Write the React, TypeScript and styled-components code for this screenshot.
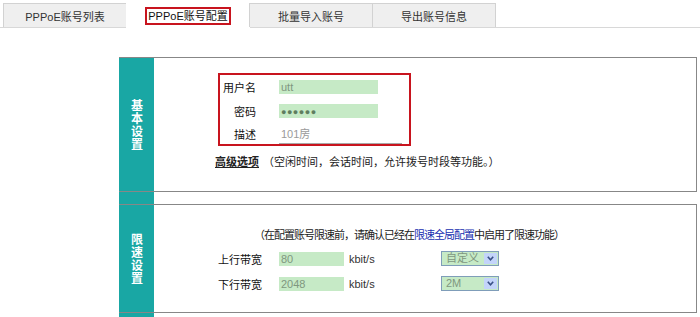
import React from 'react';
import styled, { createGlobalStyle } from 'styled-components';

const colors = {
  teal: '#19a7a4',
  line: 'rgba(0, 0, 0, 0.47)',
  field: '#c6eac6',
  fieldText: '#7f977f',
  red: '#c8141e',
  text: '#222222',
};

const GlobalStyle = createGlobalStyle`
  body {
    margin: 0;
    background: #ffffff;
    font-family: 'Liberation Sans', 'Noto Sans CJK SC', sans-serif;
    font-size: 11px;
    color: ${colors.text};
  }
`;

const Page = styled.div`
  width: 700px;
  height: 317px;
  overflow: hidden;
`;

const TabBar = styled.div`
  display: flex;
  padding: 3px 0 0 3px;
  height: 24px;
  border-bottom: 1px solid #d8d8d8;
`;

const Tab = styled.div<{ $active?: boolean }>`
  width: 124px;
  height: ${p => (p.$active ? '25px' : '24px')};
  box-sizing: border-box;
  display: flex;
  align-items: center;
  justify-content: center;
  background: ${p => (p.$active ? '#ffffff' : '#efefef')};
  border: 1px solid ${p => (p.$active ? 'transparent' : '#d2d2d2')};
  border-bottom: none;
  margin-right: -1px;
  color: #333333;
  font-size: 11px;
`;

const TabHighlight = styled.span`
  border: 2px solid ${colors.red};
  padding: 1px 1px;
  color: #111111;
  line-height: 12px;
`;

const Main = styled.div`
  margin: 29px 0 0 119px;
  width: 578px;
`;

const Panel = styled.div`
  display: grid;
  grid-template-columns: 35px 1fr;
  border-top: 1px solid ${colors.line};
  border-bottom: 1px solid ${colors.line};
`;

const Side = styled.div`
  background: ${colors.teal};
  display: flex;
  align-items: center;
  justify-content: center;
`;

const SideTitle = styled.div`
  writing-mode: vertical-rl;
  text-orientation: upright;
  font-family: 'Noto Sans CJK SC', sans-serif;
  font-size: 12px;
  letter-spacing: 1px;
  line-height: 14px;
  font-weight: 700;
  color: #ffffff;
`;

const Content = styled.div<{ $height: number }>`
  height: ${p => p.$height}px;
  border-right: 1px solid #888888;
`;

const Spacer = styled.div`
  display: grid;
  grid-template-columns: 35px 1fr;
  height: 12px;
`;

const HighlightBox = styled.div`
  margin: 15px 0 0 64px;
  width: 193px;
  height: 73px;
  box-sizing: border-box;
  border: 2px solid ${colors.red};
`;

const FormRow = styled.div<{ $height?: number; $bottom?: boolean }>`
  display: flex;
  align-items: ${p => (p.$bottom ? 'flex-end' : 'center')};
  height: ${p => p.$height ?? 24}px;
`;

const Label = styled.div<{ $width: number; $gap: number }>`
  width: ${p => p.$width}px;
  margin-right: ${p => p.$gap}px;
  text-align: right;
  font-family: 'Noto Sans CJK SC', sans-serif;
  font-size: 11px;
  line-height: 14px;
  white-space: nowrap;
  color: #111111;
`;

const LabelInRow = styled(Label)`
  align-self: center;
`;

const Field = styled.div<{ $width: number }>`
  width: ${p => p.$width}px;
  height: 14px;
  background: ${colors.field};
  color: ${colors.fieldText};
  font-size: 11px;
  line-height: 14px;
  padding-left: 2px;
  box-sizing: border-box;
`;

const Dots = styled.span`
  font-size: 9px;
  letter-spacing: 0.5px;
  color: #5f7d5f;
`;

const UnderlineField = styled.div`
  width: 123px;
  height: 17px;
  box-sizing: border-box;
  border-bottom: 1px solid #a8a8a8;
  color: #9a9a9a;
  font-family: 'Liberation Sans', 'Noto Sans CJK SC', sans-serif;
  font-size: 11px;
  line-height: 15px;
  padding-left: 2px;
`;

const AdvRow = styled.div`
  display: flex;
  align-items: center;
  margin: 7px 0 0 61px;
  height: 16px;
  font-family: 'Noto Sans CJK SC', sans-serif;
  font-size: 11px;
  white-space: nowrap;
`;

const AdvLink = styled.span`
  font-weight: 700;
  text-decoration: underline;
  color: #222222;
  margin-right: 4px;
`;

const Note = styled.div`
  padding: 21px 0 0 100px;
  height: 16px;
  line-height: 16px;
  font-family: 'Noto Sans CJK SC', sans-serif;
  font-size: 11px;
  letter-spacing: -1px;
  white-space: nowrap;
`;

const NoteLink = styled.span`
  color: #2030b0;
`;

const BwRows = styled.div`
  margin: 4px 0 0 64px;
`;

const Unit = styled.div`
  width: 92px;
  margin-left: 5px;
  color: #333333;
  font-size: 11px;
`;

const Select = styled.div`
  width: 58px;
  height: 15px;
  box-sizing: border-box;
  border: 1px solid #7f9db9;
  background: ${colors.field};
  display: flex;
  align-items: center;
  justify-content: space-between;
`;

const SelectText = styled.span`
  padding-left: 4px;
  font-family: 'Liberation Sans', 'Noto Sans CJK SC', sans-serif;
  font-size: 11px;
  line-height: 13px;
  color: ${colors.fieldText};
`;

const SelectButton = styled.span`
  width: 13px;
  height: 11px;
  margin-right: 1px;
  background: #c3d4fa;
  display: flex;
  align-items: center;
  justify-content: center;
`;

function Chevron() {
  return (
    <svg width="7" height="5" viewBox="0 0 7 5">
      <polyline points="0.8,0.8 3.5,3.8 6.2,0.8" fill="none" stroke="#3a5186" strokeWidth="1.6" />
    </svg>
  );
}

function Dropdown({ value }: { value: string }) {
  return (
    <Select>
      <SelectText>{value}</SelectText>
      <SelectButton>
        <Chevron />
      </SelectButton>
    </Select>
  );
}

const bandwidth = [
  { label: '上行带宽', value: '80', option: '自定义' },
  { label: '下行带宽', value: '2048', option: '2M' },
];

export default function App() {
  return (
    <Page>
      <GlobalStyle />
      <TabBar>
        <Tab>PPPoE账号列表</Tab>
        <Tab $active>
          <TabHighlight>PPPoE账号配置</TabHighlight>
        </Tab>
        <Tab>批量导入账号</Tab>
        <Tab>导出账号信息</Tab>
      </TabBar>

      <Main>
        <Panel>
          <Side>
            <SideTitle>基本设置</SideTitle>
          </Side>
          <Content $height={133}>
            <HighlightBox>
              <FormRow>
                <Label $width={36} $gap={23}>用户名</Label>
                <Field $width={99}>utt</Field>
              </FormRow>
              <FormRow>
                <Label $width={36} $gap={23}>密码</Label>
                <Field $width={99}>
                  <Dots>●●●●●●</Dots>
                </Field>
              </FormRow>
              <FormRow $height={21} $bottom>
                <LabelInRow $width={36} $gap={23}>描述</LabelInRow>
                <UnderlineField>101房</UnderlineField>
              </FormRow>
            </HighlightBox>
            <AdvRow>
              <AdvLink>高级选项</AdvLink>
              （空闲时间，会话时间，允许拨号时段等功能。）
            </AdvRow>
          </Content>
        </Panel>

        <Spacer>
          <Side />
        </Spacer>

        <Panel>
          <Side>
            <SideTitle>限速设置</SideTitle>
          </Side>
          <Content $height={107}>
            <Note>
              （在配置账号限速前，请确认已经在<NoteLink>限速全局配置</NoteLink>中启用了限速功能）
            </Note>
            <BwRows>
              {bandwidth.map(row => (
                <FormRow key={row.label} $height={25}>
                  <Label $width={40} $gap={21}>{row.label}</Label>
                  <Field $width={65}>{row.value}</Field>
                  <Unit>kbit/s</Unit>
                  <Dropdown value={row.option} />
                </FormRow>
              ))}
            </BwRows>
          </Content>
        </Panel>

        <Spacer>
          <Side />
        </Spacer>
      </Main>
    </Page>
  );
}
